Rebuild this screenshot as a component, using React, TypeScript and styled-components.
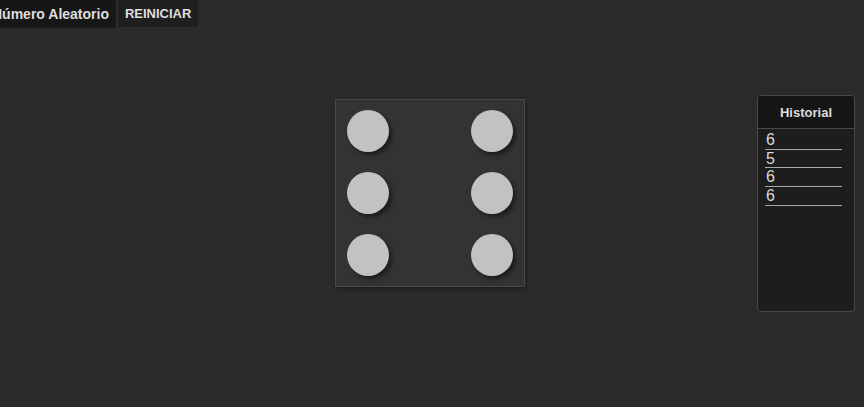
import React from 'react';
import styled, { createGlobalStyle } from 'styled-components';

const GlobalStyle = createGlobalStyle`
  html, body {
    margin: 0;
    padding: 0;
    background: #2a2a2a;
    font-family: "Liberation Sans", Arial, sans-serif;
    overflow: hidden;
  }
`;

const HISTORY = [6, 5, 6, 6];

const App = () => {
  return (
    <Page>
      <GlobalStyle />
      <Toolbar>
        <ToolButton dark big>Número Aleatorio</ToolButton>
        <ToolButton>REINICIAR</ToolButton>
      </Toolbar>
      <Stage>
        <span />
        <Die>
          {Array.from({ length: 6 }).map((_, i) => (
            <Pip key={i} />
          ))}
        </Die>
        <HistoryPanel>
          <HistoryHeader>Historial</HistoryHeader>
          <HistoryList>
            {HISTORY.map((n, i) => (
              <HistoryItem key={i}>{n}</HistoryItem>
            ))}
          </HistoryList>
        </HistoryPanel>
      </Stage>
    </Page>
  );
};

export default App;

const Page = styled.div`
  width: 864px;
  height: 407px;
  background: #2a2a2a;
  overflow: hidden;
`;

const Toolbar = styled.div`
  display: flex;
  gap: 1px;
  margin-left: -15px;
  height: 28px;
`;

const ToolButton = styled.button<{ dark?: boolean; big?: boolean }>`
  font-family: "Liberation Sans", Arial, sans-serif;
  font-size: ${p => (p.big ? '14px' : '13px')};
  font-weight: 700;
  color: #dedede;
  background: ${p => (p.dark ? '#161616' : '#1f1f1f')};
  border: 1px solid ${p => (p.dark ? '#1c1c1c' : '#2c2c2c')};
  border-top: none;
  padding: 0 ${p => (p.big ? '6px' : '7px')};
  height: 28px;
  cursor: pointer;
`;

const Stage = styled.div`
  display: grid;
  grid-template-columns: 1fr 190px 1fr;
  align-items: start;
  padding-top: 67px;
  padding-right: 9px;
`;

const Die = styled.div`
  box-sizing: border-box;
  width: 190px;
  height: 188px;
  margin-top: 4px;
  margin-left: 2px;
  background: #333333;
  border: 1px solid #494949;
  box-shadow: 1px 2px 4px rgba(0, 0, 0, 0.35);
  padding: 10px 11px;
  display: grid;
  grid-template-columns: 42px 42px;
  justify-content: space-between;
  align-content: space-between;
  row-gap: 20px;
`;

const Pip = styled.div`
  width: 42px;
  height: 42px;
  border-radius: 50%;
  background: #c2c2c2;
  box-shadow: 3px 3px 4px rgba(0, 0, 0, 0.45);
`;

const HistoryPanel = styled.div`
  justify-self: end;
  box-sizing: border-box;
  width: 98px;
  height: 217px;
  background: #1d1d1d;
  border: 1px solid #4a4a4a;
  border-radius: 4px;
  overflow: hidden;
  display: flex;
  flex-direction: column;
`;

const HistoryHeader = styled.div`
  height: 32px;
  background: #151515;
  border-bottom: 1px solid #4a4a4a;
  display: flex;
  align-items: center;
  justify-content: center;
  font-size: 13px;
  font-weight: 700;
  color: #dcdcdc;
`;

const HistoryList = styled.div`
  padding: 2px 12px 0 7px;
`;

const HistoryItem = styled.div`
  font-size: 16px;
  line-height: 17.7px;
  color: #d8d8d8;
  border-bottom: 1px solid #a8a8a8;
  padding-left: 1px;
`;
